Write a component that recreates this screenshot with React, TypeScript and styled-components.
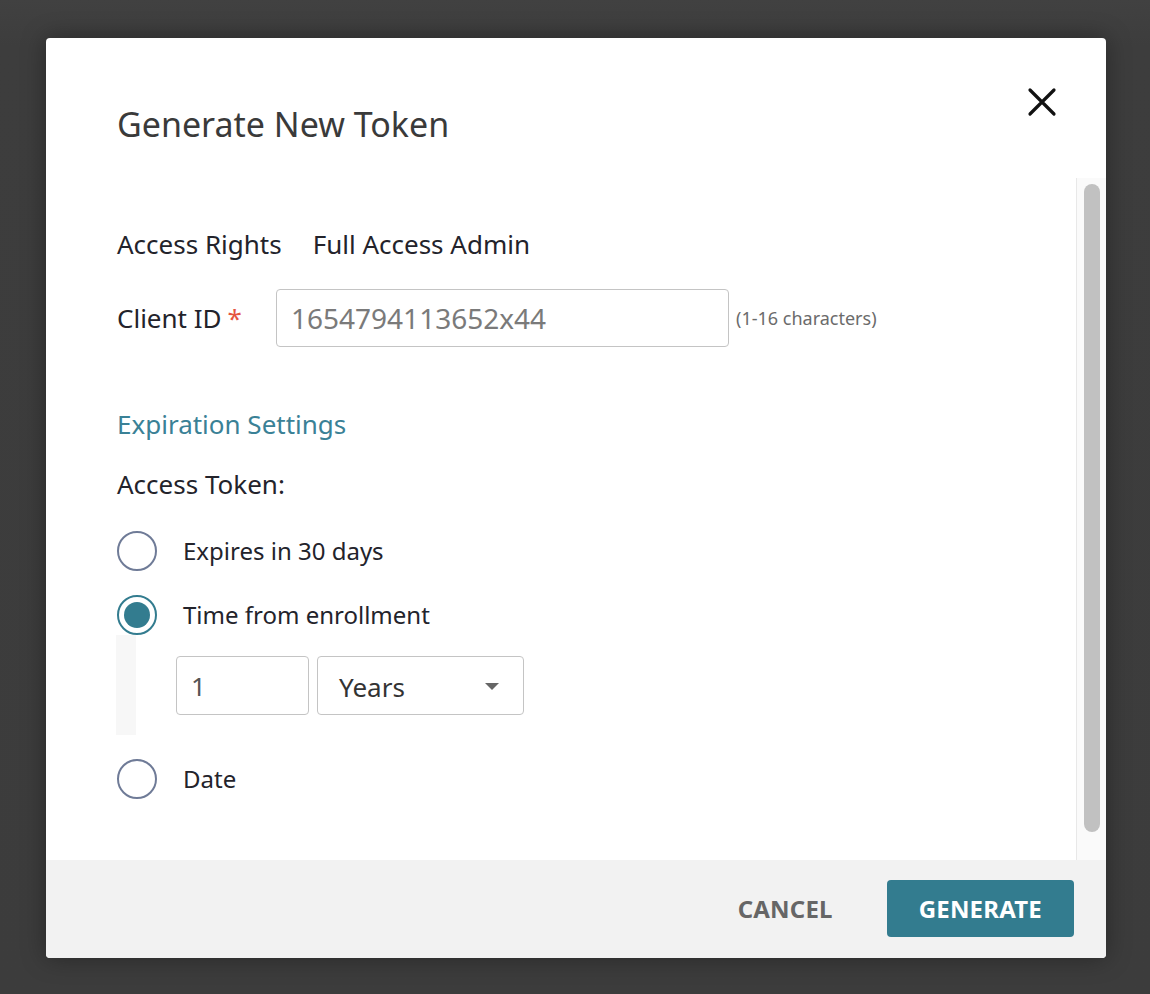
import * as React from 'react';
import styled, { createGlobalStyle } from 'styled-components';

const colors = {
	backdrop: '#3e3e3e',
	white: '#ffffff',
	title: '#3a3a3a',
	text: '#23232b',
	muted: '#6b6b6b',
	placeholder: '#7a7a7a',
	border: '#c4c4c4',
	teal: '#337c8f',
	tealText: '#3a8196',
	radio: '#6f7b97',
	required: '#e5553f',
	footer: '#f2f2f2',
	track: '#fafafa',
	trackLine: '#e8e8e8',
	thumb: '#c1c1c1'
};

const font = `"Noto Sans", "Open Sans", "Liberation Sans", sans-serif`;

const GlobalStyle = createGlobalStyle`
	html, body {
		margin: 0;
		padding: 0;
		background: ${colors.backdrop};
	}
	* {
		box-sizing: border-box;
	}
`;

const Backdrop = styled.div`
	width: 1150px;
	height: 994px;
	padding: 38px 0 0 46px;
	background: linear-gradient(to bottom, #414141 0, #3d3d3d 46px, #3c3c3c 100%);
	font-family: ${font};
`;

const Modal = styled.div`
	display: flex;
	flex-direction: column;
	width: 1060px;
	height: 920px;
	border-radius: 4px;
	overflow: hidden;
	background: ${colors.white};
	box-shadow: 0 0 24px rgba(0, 0, 0, 0.35);
`;

const Header = styled.div`
	position: relative;
	height: 140px;
	padding: 63px 0 0 71px;
`;

const Title = styled.h1`
	margin: 0;
	font-size: 34px;
	font-weight: 400;
	line-height: 46px;
	color: ${colors.title};
`;

const CloseButton = styled.button`
	position: absolute;
	top: 48px;
	right: 48px;
	width: 32px;
	height: 32px;
	padding: 0;
	border: none;
	background: none;
	cursor: pointer;
`;

const Body = styled.div`
	display: flex;
	flex: 1;
	min-height: 0;
`;

const Content = styled.div`
	flex: 1;
	padding: 50px 0 0 71px;
	color: ${colors.text};
	font-size: 26px;
`;

const ScrollTrack = styled.div`
	width: 30px;
	padding: 6px 6px 28px 7px;
	border-left: 1px solid ${colors.trackLine};
	background: ${colors.track};
`;

const ScrollThumb = styled.div`
	height: 100%;
	width: 16px;
	border-radius: 8px;
	background: ${colors.thumb};
`;

const InfoRow = styled.div`
	display: flex;
	gap: 31px;
	line-height: 32px;
`;

const FieldRow = styled.div`
	display: flex;
	align-items: center;
	margin-top: 29px;
	height: 58px;
`;

const FieldLabel = styled.label`
	width: 159px;
	line-height: 32px;
`;

const Required = styled.span`
	margin-left: 6px;
	color: ${colors.required};
`;

const TextInput = styled.input<{ width: number; size?: number }>`
	width: ${p => p.width}px;
	height: 100%;
	padding: 0 14px;
	border: 1.5px solid ${colors.border};
	border-radius: 4px;
	font-family: ${font};
	font-size: ${p => p.size || 26}px;
	color: #555;
	outline: none;

	&::placeholder {
		color: ${colors.placeholder};
	}
`;

const Hint = styled.span`
	margin-left: 7px;
	font-size: 18px;
	color: ${colors.muted};
`;

const SectionTitle = styled.h2`
	margin: 60px 0 0;
	font-size: 26px;
	font-weight: 400;
	line-height: 34px;
	color: ${colors.tealText};
`;

const SubLabel = styled.div`
	margin-top: 27px;
	line-height: 32px;
`;

const RadioList = styled.div`
	display: flex;
	flex-direction: column;
	margin-top: 31px;
	font-size: 24px;
`;

const RadioRow = styled.label<{ gapTop?: number }>`
	display: flex;
	align-items: center;
	gap: 26px;
	margin-top: ${p => p.gapTop || 0}px;
	height: 40px;
	cursor: pointer;
`;

const RadioCircle = styled.span<{ checked?: boolean }>`
	display: flex;
	align-items: center;
	justify-content: center;
	width: 40px;
	height: 40px;
	border-radius: 50%;
	border: 2px solid ${p => (p.checked ? colors.teal : colors.radio)};
	background: ${colors.white};

	&::after {
		content: '';
		display: ${p => (p.checked ? 'block' : 'none')};
		width: 26px;
		height: 26px;
		border-radius: 50%;
		background: ${colors.teal};
	}
`;

const RadioText = styled.span`
	line-height: 32px;
`;

const Nested = styled.div`
	display: flex;
	gap: 40px;
	margin-left: -1px;
`;

const NestedBar = styled.div`
	width: 20px;
	background: #f7f7f7;
`;

const NestedFields = styled.div`
	display: flex;
	gap: 8px;
	padding: 21px 0 20px;
	height: 100px;
`;

const Select = styled.div`
	display: flex;
	align-items: center;
	justify-content: space-between;
	width: 207px;
	height: 59px;
	padding: 2px 24px 0 21px;
	border: 1.5px solid ${colors.border};
	border-radius: 4px;
	font-size: 26px;
	color: #333;
`;

const Caret = styled.span`
	width: 0;
	height: 0;
	border-left: 7px solid transparent;
	border-right: 7px solid transparent;
	border-top: 7px solid #666;
`;

const Footer = styled.div`
	display: flex;
	align-items: center;
	justify-content: flex-end;
	gap: 30px;
	height: 98px;
	padding: 0 32px 1px 0;
	background: ${colors.footer};
`;

const FooterButton = styled.button<{ primary?: boolean }>`
	height: 57px;
	padding: 0 ${p => (p.primary ? 32 : 24)}px;
	border: none;
	border-radius: 4px;
	background: ${p => (p.primary ? colors.teal : 'transparent')};
	color: ${p => (p.primary ? colors.white : '#666666')};
	font-family: ${font};
	font-size: 24px;
	font-weight: 700;
	letter-spacing: 0.2px;
	cursor: pointer;
`;

const CloseIcon = () => (
	<svg width="32" height="32" viewBox="0 0 32 32">
		<path d="M4 4 L28 28 M28 4 L4 28" stroke="#111" strokeWidth="3.2" strokeLinecap="round" />
	</svg>
);

export default function App() {
	const [choice, setChoice] = React.useState('enrollment');

	return (
		<Backdrop>
			<GlobalStyle />
			<Modal>
				<Header>
					<Title>Generate New Token</Title>
					<CloseButton aria-label="Close">
						<CloseIcon />
					</CloseButton>
				</Header>
				<Body>
					<Content>
						<InfoRow>
							<span>Access Rights</span>
							<span>Full Access Admin</span>
						</InfoRow>
						<FieldRow>
							<FieldLabel>
								Client ID<Required>*</Required>
							</FieldLabel>
							<TextInput width={453} size={28} placeholder="1654794113652x44" />
							<Hint>(1-16 characters)</Hint>
						</FieldRow>
						<SectionTitle>Expiration Settings</SectionTitle>
						<SubLabel>Access Token:</SubLabel>
						<RadioList>
							<RadioRow onClick={() => setChoice('30days')}>
								<RadioCircle checked={choice === '30days'} />
								<RadioText>Expires in 30 days</RadioText>
							</RadioRow>
							<RadioRow gapTop={24} onClick={() => setChoice('enrollment')}>
								<RadioCircle checked={choice === 'enrollment'} />
								<RadioText>Time from enrollment</RadioText>
							</RadioRow>
							<Nested>
								<NestedBar />
								<NestedFields>
									<TextInput width={133} defaultValue="1" />
									<Select>
										<span>Years</span>
										<Caret />
									</Select>
								</NestedFields>
							</Nested>
							<RadioRow gapTop={24} onClick={() => setChoice('date')}>
								<RadioCircle checked={choice === 'date'} />
								<RadioText>Date</RadioText>
							</RadioRow>
						</RadioList>
					</Content>
					<ScrollTrack>
						<ScrollThumb />
					</ScrollTrack>
				</Body>
				<Footer>
					<FooterButton>CANCEL</FooterButton>
					<FooterButton primary>GENERATE</FooterButton>
				</Footer>
			</Modal>
		</Backdrop>
	);
}
